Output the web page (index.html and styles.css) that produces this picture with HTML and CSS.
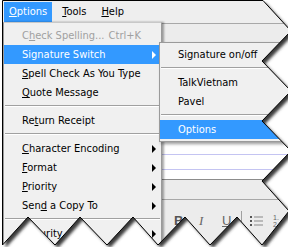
FILE: index.html
```html
<!DOCTYPE html>
<html lang="en">
<head>
    <meta charset="UTF-8">
    <title>Options menu</title>
    <link rel="stylesheet" href="styles.css">
</head>
<body>
    <div class="window">
        <div class="menubar">
            <span class="menu-title active"><u>O</u>ptions</span>
            <span class="menu-title"><u>T</u>ools</span>
            <span class="menu-title"><u>H</u>elp</span>
        </div>

        <!-- the compose window behind the menus -->
        <div class="upper"></div>
        <div class="fields">
            <div class="field"></div>
            <div class="field"></div>
            <div class="field"></div>
        </div>
        <div class="strip"></div>
        <div class="format-bar">
            <span class="fmt bold">B</span>
            <span class="fmt italic">I</span>
            <span class="fmt under">U</span>
            <span class="fmt-sep"></span>
            <svg class="fmt-icon" width="13" height="12" viewBox="0 0 13 12">
                <rect x="0" y="1" width="2" height="2" fill="#555"/>
                <rect x="0" y="5" width="2" height="2" fill="#555"/>
                <rect x="0" y="9" width="2" height="2" fill="#555"/>
                <rect x="4" y="1.5" width="9" height="1" fill="#888"/>
                <rect x="4" y="5.5" width="9" height="1" fill="#888"/>
                <rect x="4" y="9.5" width="9" height="1" fill="#888"/>
            </svg>
            <span class="fmt numbers">1.<br>2.</span>
        </div>

        <ul class="menu main-menu">
            <li class="item disabled"><span>C<u>h</u>eck Spelling...</span><span class="shortcut">Ctrl+K</span></li>
            <li class="item selected"><span>Signature Switch</span><span class="arrow"></span></li>
            <li class="item"><span><u>S</u>pell Check As You Type</span></li>
            <li class="item"><span><u>Q</u>uote Message</span></li>
            <li class="sep"></li>
            <li class="item"><span>Re<u>t</u>urn Receipt</span></li>
            <li class="sep"></li>
            <li class="item"><span><u>C</u>haracter Encoding</span><span class="arrow"></span></li>
            <li class="item"><span><u>F</u>ormat</span><span class="arrow"></span></li>
            <li class="item"><span><u>P</u>riority</span><span class="arrow"></span></li>
            <li class="item"><span>Sen<u>d</u> a Copy To</span><span class="arrow"></span></li>
            <li class="sep"></li>
            <li class="item"><span>Sec<u>u</u>rity</span><span class="arrow"></span></li>
        </ul>

        <ul class="menu sub-menu">
            <li class="item"><span>Signature on/off</span></li>
            <li class="sep"></li>
            <li class="item"><span>TalkVietnam</span></li>
            <li class="item"><span>Pavel</span></li>
            <li class="sep"></li>
            <li class="item selected"><span>Options</span></li>
        </ul>

        <!-- torn paper edge over the screenshot -->
        <svg class="tear" width="288" height="247" viewBox="0 0 288 247">
            <defs>
                <filter id="soft" x="-10%" y="-10%" width="120%" height="120%">
                    <feGaussianBlur stdDeviation="1.4"/>
                </filter>
                <clipPath id="outside">
                    <path clip-rule="evenodd" d="M-20,-20H310V270H-20Z M2.5,0.5 L263,0.5 L291,31 L262,61 L291,91 L262,121 L291,151 L262,181 L289,211 L262,245 L237,217 L210,245 L185,217 L158,245 L133,217 L107,245 L80,217 L55,245 L28,217 L2.5,245 Z"/>
                </clipPath>
            </defs>
            <path fill="#fff" fill-rule="evenodd" d="M-20,-20H310V270H-20Z M2.5,0.5 L263,0.5 L291,31 L262,61 L291,91 L262,121 L291,151 L262,181 L289,211 L262,245 L237,217 L210,245 L185,217 L158,245 L133,217 L107,245 L80,217 L55,245 L28,217 L2.5,245 Z"/>
            <g clip-path="url(#outside)">
                <path fill="#3a3a3a" filter="url(#soft)" transform="translate(3,3)" d="M2.5,0.5 L263,0.5 L291,31 L262,61 L291,91 L262,121 L291,151 L262,181 L289,211 L262,245 L237,217 L210,245 L185,217 L158,245 L133,217 L107,245 L80,217 L55,245 L28,217 L2.5,245 Z"/>
            </g>
            <path fill="none" stroke="#000" stroke-width="1" d="M2.5,0.5 L263,0.5 L291,31 L262,61 L291,91 L262,121 L291,151 L262,181 L289,211 L262,245 L237,217 L210,245 L185,217 L158,245 L133,217 L107,245 L80,217 L55,245 L28,217 L2.5,245 Z"/>
        </svg>
    </div>
</body>
</html>
```

FILE: styles.css
```css
body {
    margin: 0;
    padding: 0;
    background-color: #fff;
    font-family: "DejaVu Sans Condensed", "DejaVu Sans", sans-serif;
    font-stretch: condensed;
    font-size: 11px;
    color: #000;
}
.window {
    position: relative;
    width: 288px;
    height: 247px;
    overflow: hidden;
    background-color: #ececec;
}
u {
    text-decoration: underline;
    text-underline-offset: 1px;
}
.menubar {
    display: flex;
    height: 21px;
    padding: 2px 0 0 4px;
    background-color: #eeeeee;
}
.menu-title {
    height: 20px;
    line-height: 20px;
    padding: 0 5px;
    margin-right: 5px;
}
.menu-title.active {
    background-color: #3399ff;
    color: #fff;
}
.upper {
    height: 116px;
    border-top: 1px solid #a8a8a8;
    background-color: #ececec;
}
.fields {
    background-color: #fff;
}
.field {
    height: 14px;
    border-bottom: 1px solid #c4c4f2;
}
.field:last-child {
    height: 9px;
    border-bottom: none;
}
.strip {
    height: 19px;
    border-top: 1px solid #8c8c8c;
    border-bottom: 1px solid #a8a8a8;
    background-color: #ececec;
}
.format-bar {
    display: flex;
    align-items: flex-start;
    padding: 14px 0 0 174px;
    height: 40px;
    background-color: #ececec;
}
.fmt {
    font-family: "Liberation Sans", sans-serif;
    font-size: 13px;
    line-height: 13px;
    color: #555;
}
.bold {
    font-weight: bold;
    width: 25px;
}
.italic {
    font-family: "Liberation Serif", serif;
    font-style: italic;
    width: 23px;
    color: #666;
}
.under {
    text-decoration: underline;
    width: 19px;
    color: #666;
}
.fmt-sep {
    width: 1px;
    height: 18px;
    margin: -3px 8px 0 0;
    background-color: #a0a0a0;
}
.fmt-icon {
    margin: 1px 10px 0 0;
}
.numbers {
    font-size: 7px;
    line-height: 7px;
    color: #666;
}
.menu {
    position: absolute;
    margin: 0;
    list-style: none;
    background-color: #f0f0f0;
    box-sizing: border-box;
}
.main-menu {
    left: 3px;
    top: 22px;
    width: 159px;
    height: 240px;
    padding: 3px 0 0 0;
    border: 1px solid #9a9a9a;
    border-top-color: #c8c8c8;
    box-shadow: 2px 0 2px rgba(0, 0, 0, 0.35);
}
.sub-menu {
    left: 159px;
    top: 42px;
    width: 150px;
    padding: 2px 0;
    border: 1px solid #9a9a9a;
    box-shadow: 2px 2px 3px rgba(0, 0, 0, 0.4);
}
.item {
    display: flex;
    align-items: center;
    height: 19px;
    line-height: 19px;
    padding: 0 5px 0 18px;
    white-space: nowrap;
}
.item.selected {
    background-color: #3399ff;
    color: #fff;
}
.item.disabled {
    color: #a0a0a0;
}
.shortcut {
    margin-left: auto;
    margin-right: 15px;
}
.arrow {
    margin-left: auto;
    width: 0;
    height: 0;
    border-style: solid;
    border-width: 4px 0 4px 4px;
    border-color: transparent transparent transparent #000;
}
.selected .arrow {
    border-left-color: #fff;
}
.sep {
    height: 0;
    margin: 3px 1px 4px 1px;
    border-top: 1px solid #a0a0a0;
    border-bottom: 1px solid #fff;
}
.tear {
    position: absolute;
    left: 0;
    top: 0;
}
```
